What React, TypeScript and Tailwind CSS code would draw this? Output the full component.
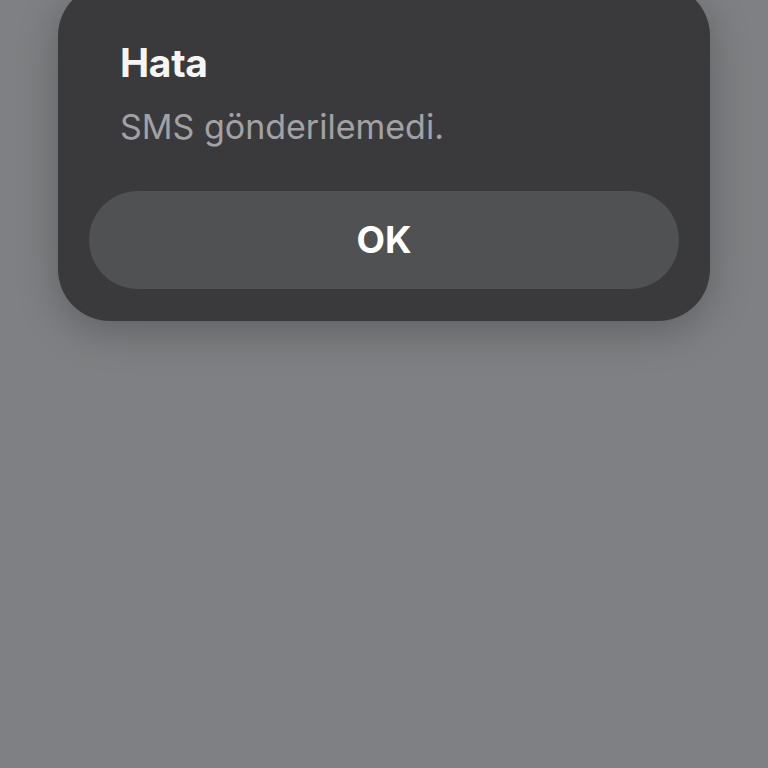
export default function App() {
  return (
    <div
      className="w-[768px] h-[768px] overflow-hidden bg-[#7f8083]"
      style={{ fontFamily: "Inter, 'Liberation Sans', sans-serif" }}
    >
      <div className="ml-[58px] mt-[-16px] w-[652px] rounded-[52px] bg-[#3a3a3c] shadow-[0_10px_40px_rgba(0,0,0,0.25)] pt-[57px] pb-[32px] px-[31px]">
        <div className="px-[31px]">
          <h1 className="text-[39px] leading-[44px] font-bold text-[#f5f5f5] tracking-[-0.3px]">
            Hata
          </h1>
          <p className="mt-[21px] text-[34px] leading-[42px] text-[#a2a2a5]">
            SMS gönderilemedi.
          </p>
        </div>
        <button
          type="button"
          className="mt-[43px] w-full h-[98px] rounded-[49px] bg-[#505153] text-[37px] font-bold text-white"
        >
          OK
        </button>
      </div>
    </div>
  );
}
